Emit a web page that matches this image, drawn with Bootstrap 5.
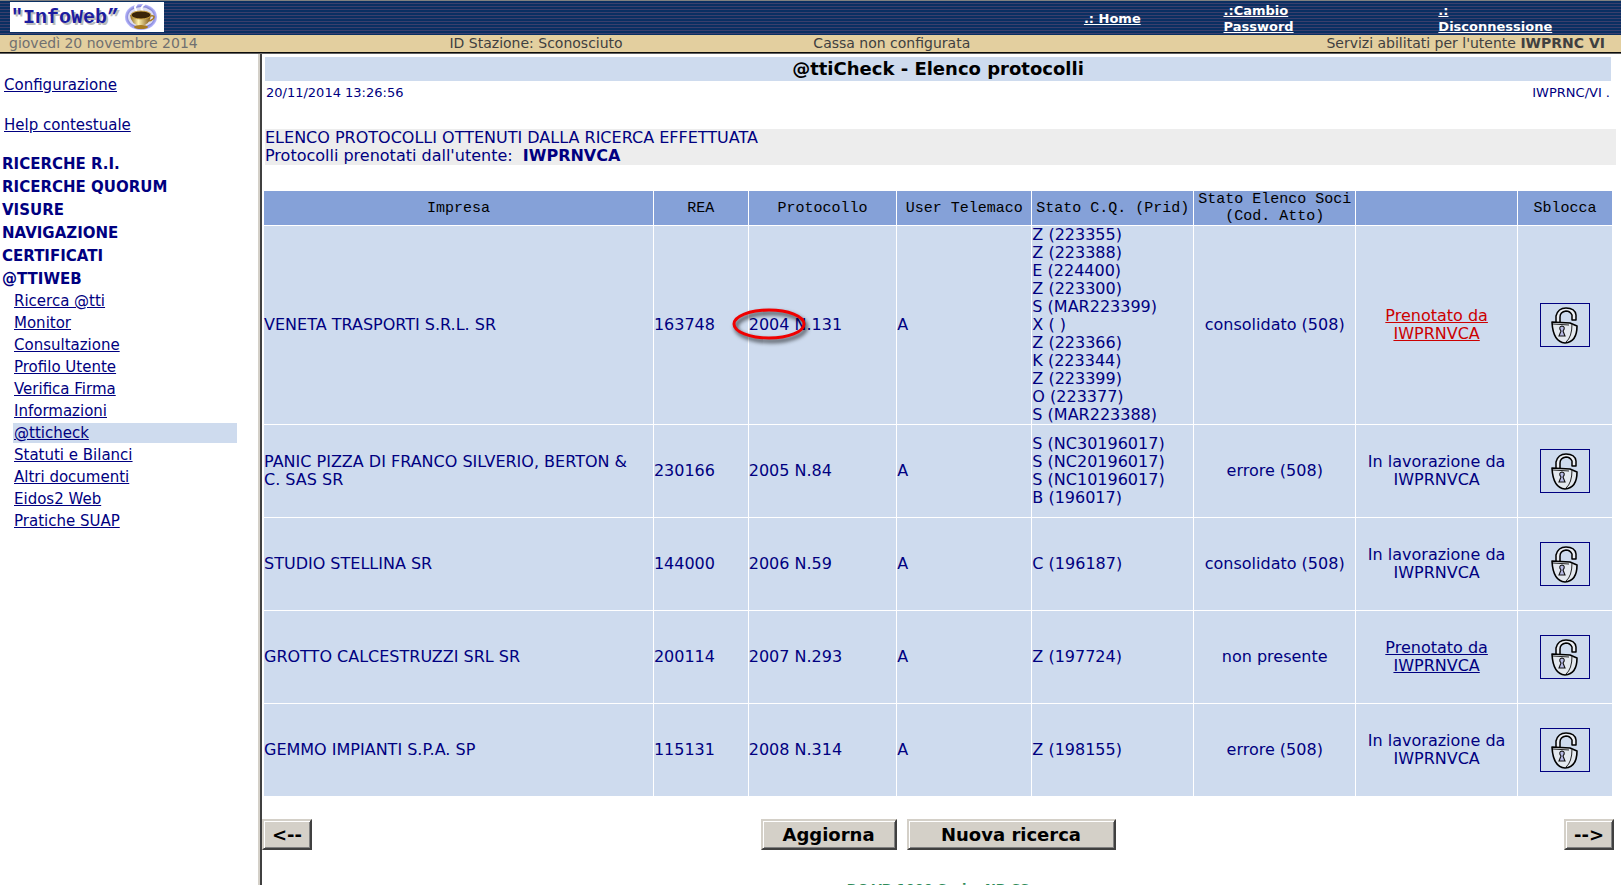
<!DOCTYPE html>
<html lang="it">
<head>
<meta charset="utf-8">
<meta name="viewport" content="width=device-width, initial-scale=1">
<title>InfoWeb - @ttiCheck</title>
<link href="https://cdn.jsdelivr.net/npm/bootstrap@5.3.0/dist/css/bootstrap.min.css" rel="stylesheet">
<style>
body{font-family:"DejaVu Sans",sans-serif;font-size:15px;line-height:18px;color:navy;background:#fff;height:100vh;overflow:hidden}
a{color:navy;text-decoration:underline}
.topband{height:35px;border-top:1px solid #808080;background:repeating-linear-gradient(#0a2f62 0 2px,#3a3f6c 2px 3px)}
.brandbox{background:#fff;width:154px;height:30px;margin:1px 0 0 10px}
.topnav{width:34%;padding:2px 0 0 14px;font-size:13px;line-height:16px;font-weight:700}
.topnav a{color:#fff}
.topnav .n1{width:26%}.topnav .n2{width:40%}
.statusbar{background:#e3cf9f;color:#404040;height:19px;line-height:17px;padding:0 16px 0 9px;border-bottom:2px groove #606060;font-size:14px}
.statusbar .c1{width:27.6%;color:#707070}.statusbar .c2{width:22.8%}
.sidepane{width:260px;padding-top:22px;border-right:2px solid #d4d0c8}
.sidepane h2{font-size:15px;line-height:23px;font-weight:700;margin:0;padding-left:2px}
.toplink{padding:0 0 22px 4px}
.toplink + h2{margin-top:-3px}
.sublist{margin:0 21px 0 13px}
.sublist li{line-height:20px;margin-bottom:2px;padding-left:1px}
.sublist .current{background:#cedbee}
.mainpane{border-left:2px solid #404040;padding:3px 7px 0 0}
.pagetitle{background:#cedbee;color:#000;font-size:18px;font-weight:700;line-height:24px;margin:0 3px}
.stamp{font-size:13px;margin:3px 4px 27px}
.resume{background:#ededed;font-size:16px;margin:0 -2px 25px 3px}
.tablebox{padding:0 1px}
.results{table-layout:fixed;border-collapse:separate;border-spacing:1px;font-size:16px;width:100%}
.results th{background:#85a1d8;color:#000;font:15px/17px "Liberation Mono",monospace;text-align:center;padding:0;height:34px}
.results td{background:#cedbee;height:92px;padding:0}
.locked{border:1px solid navy;background:none;width:50px;height:44px;padding:0}
.reserved{color:#c00}
.ring{left:-16px;top:-8px;width:80px;height:36px;pointer-events:none;overflow:visible}
.actions{margin-top:22px}
.actionpair{gap:10px}
.retro{background:#d4d0c8;border:2px solid;border-color:#d4d0c8 #404040 #404040 #d4d0c8;box-shadow:inset 1px 1px #fff,inset -1px -1px #808080;font-size:18px;font-weight:700;height:31px;padding:0;color:#000;width:50px}
.w-agg{width:136px}.w-new{width:209px}
.foot{color:#2e8b57;font-size:13px;font-weight:700;margin-top:30px}
</style>
<script src="https://cdn.jsdelivr.net/npm/bootstrap@5.3.0/dist/js/bootstrap.bundle.min.js"></script>
</head>
<body class="d-flex flex-column">
<svg width="0" height="0" class="position-absolute" aria-hidden="true">
<symbol id="lock" viewBox="0 0 28 38">
<path d="M5 16 L5 10 Q7 2 15 2 Q24 2 25 9 L25 14 L21 14 L21 9 Q19 5 15 5 Q9 6 9 11 L9 16" fill="#eceff4" stroke="#000" stroke-width="1.5" stroke-linejoin="round"/>
<path d="M1 16 L19 17 L26 20 Q26 36 14 37 Q2 36 1 16 Z" fill="#e4e9ef" stroke="#000" stroke-width="1.6" stroke-linejoin="round"/>
<path d="M21 18 Q21 31 15 36 M2 18 L18 19" fill="none" stroke="#222" stroke-width="1"/>
<path d="M8 30 L10 25 Q7 21 11 20 Q15 21 12 25 L14 30 Z" fill="#b9bce6" stroke="#111" stroke-width="1.1"/>
</symbol>
</svg>
<header>
<div class="topband d-flex justify-content-between">
<div class="brandbox flex-shrink-0">
<svg width="154" height="30" class="d-block" role="img" aria-label="InfoWeb">
<defs><radialGradient id="halo"><stop offset=".75" stop-color="#77c"/><stop offset="1" stop-color="#bbf"/></radialGradient><linearGradient id="gold"><stop stop-color="#8a6418"/><stop offset=".4" stop-color="#fff2b0"/><stop offset="1" stop-color="#7a5010"/></linearGradient></defs>
<g font-family="Liberation Mono, monospace" font-weight="700" font-size="20"><text x="3" y="23" fill="#bbb">"InfoWeb”</text><text x="1" y="21" fill="#1c1ca0">"InfoWeb”</text></g>
<ellipse cx="131" cy="15" rx="16" ry="13" fill="url(#halo)"/><ellipse cx="131" cy="15" rx="13" ry="10" fill="#dcdcf2"/>
<path d="M127 9 Q123 6 127 2 M133 9 Q129 6 135 2" stroke="#fff" stroke-width="2" fill="none"/>
<path d="M140 14 Q146 13 143 17 Q141 19 138 19" stroke="#a87a20" stroke-width="1.5" fill="none"/>
<path d="M120 13 Q121 23 131 24 Q140 23 141 13Z" fill="url(#gold)"/><ellipse cx="131" cy="13" rx="10" ry="4" fill="#3a2408" stroke="#c9a040"/><ellipse cx="131" cy="25" rx="7" ry="2" fill="#a87a20"/>
</svg>
</div>
<nav class="topnav d-flex align-items-center">
<div class="n1"><a href="#">.: Home</a></div>
<div class="n2"><a href="#">.:Cambio<br>Password</a></div>
<div><a href="#">.:<br>Disconnessione</a></div>
</nav>
</div>
<div class="statusbar d-flex">
<span class="c1">giovedì 20 novembre 2014</span><span class="c2">ID Stazione: Sconosciuto</span><span>Cassa non configurata</span><span class="ms-auto">Servizi abilitati per l'utente <b>IWPRNC VI</b></span>
</div>
</header>
<div class="d-flex flex-grow-1">
<aside class="sidepane flex-shrink-0">
<div class="toplink"><a href="#">Configurazione</a></div>
<div class="toplink"><a href="#">Help contestuale</a></div>
<h2>RICERCHE R.I.</h2><h2>RICERCHE QUORUM</h2><h2>VISURE</h2><h2>NAVIGAZIONE</h2><h2>CERTIFICATI</h2><h2>@TTIWEB</h2>
<ul class="sublist list-unstyled">
<li><a href="#">Ricerca @tti</a></li><li><a href="#">Monitor</a></li><li><a href="#">Consultazione</a></li><li><a href="#">Profilo Utente</a></li><li><a href="#">Verifica Firma</a></li><li><a href="#">Informazioni</a></li><li class="current"><a href="#">@tticheck</a></li><li><a href="#">Statuti e Bilanci</a></li><li><a href="#">Altri documenti</a></li><li><a href="#">Eidos2 Web</a></li><li><a href="#">Pratiche SUAP</a></li>
</ul>
</aside>
<main class="mainpane flex-grow-1">
<h1 class="pagetitle text-center">@ttiCheck - Elenco protocolli</h1>
<div class="stamp d-flex justify-content-between"><span>20/11/2014 13:26:56</span><span>IWPRNC/VI .</span></div>
<div class="resume">ELENCO PROTOCOLLI OTTENUTI DALLA RICERCA EFFETTUATA<br>Protocolli prenotati dall'utente:&nbsp; <b>IWPRNVCA</b></div>
<div class="tablebox">
<table class="results align-middle">
<colgroup><col style="width:29%"><col style="width:7%"><col style="width:11%"><col style="width:10%"><col style="width:12%"><col style="width:12%"><col style="width:12%"><col style="width:7%"></colgroup>
<thead><tr><th>Impresa</th><th>REA</th><th>Protocollo</th><th>User Telemaco</th><th>Stato C.Q. (Prid)</th><th>Stato Elenco Soci (Cod. Atto)</th><th></th><th>Sblocca</th></tr></thead>
<tbody>
<tr><td>VENETA TRASPORTI S.R.L. SR</td><td>163748</td><td><div class="position-relative">2004 N.131<svg class="ring position-absolute" viewBox="0 0 80 36" aria-hidden="true"><ellipse cx="36" cy="16" rx="35" ry="14" fill="none" stroke="#f00000" stroke-width="3" style="filter:drop-shadow(2px 3px 2px #000c)"/></svg></div></td><td>A</td><td>Z (223355)<br>Z (223388)<br>E (224400)<br>Z (223300)<br>S (MAR223399)<br>X ( )<br>Z (223366)<br>K (223344)<br>Z (223399)<br>O (223377)<br>S (MAR223388)</td><td class="text-center">consolidato (508)</td><td class="text-center"><a class="reserved" href="#">Prenotato da<br>IWPRNVCA</a></td><td class="text-center"><button class="locked" aria-label="Sblocca"><svg width="28" height="38"><use href="#lock"/></svg></button></td></tr>
<tr><td>PANIC PIZZA DI FRANCO SILVERIO, BERTON &amp;<br>C. SAS SR</td><td>230166</td><td>2005 N.84</td><td>A</td><td>S (NC30196017)<br>S (NC20196017)<br>S (NC10196017)<br>B (196017)</td><td class="text-center">errore (508)</td><td class="text-center">In lavorazione da<br>IWPRNVCA</td><td class="text-center"><button class="locked" aria-label="Sblocca"><svg width="28" height="38"><use href="#lock"/></svg></button></td></tr>
<tr><td>STUDIO STELLINA SR</td><td>144000</td><td>2006 N.59</td><td>A</td><td>C (196187)</td><td class="text-center">consolidato (508)</td><td class="text-center">In lavorazione da<br>IWPRNVCA</td><td class="text-center"><button class="locked" aria-label="Sblocca"><svg width="28" height="38"><use href="#lock"/></svg></button></td></tr>
<tr><td>GROTTO CALCESTRUZZI SRL SR</td><td>200114</td><td>2007 N.293</td><td>A</td><td>Z (197724)</td><td class="text-center">non presente</td><td class="text-center"><a href="#">Prenotato da<br>IWPRNVCA</a></td><td class="text-center"><button class="locked" aria-label="Sblocca"><svg width="28" height="38"><use href="#lock"/></svg></button></td></tr>
<tr><td>GEMMO IMPIANTI S.P.A. SP</td><td>115131</td><td>2008 N.314</td><td>A</td><td>Z (198155)</td><td class="text-center">errore (508)</td><td class="text-center">In lavorazione da<br>IWPRNVCA</td><td class="text-center"><button class="locked" aria-label="Sblocca"><svg width="28" height="38"><use href="#lock"/></svg></button></td></tr>
</tbody>
</table>
</div>
<div class="actions d-flex justify-content-between">
<button class="retro">&lt;--</button>
<div class="actionpair d-flex"><button class="retro w-agg">Aggiorna</button><button class="retro w-new">Nuova ricerca</button></div>
<button class="retro">--&gt;</button>
</div>
<div class="foot text-center">DC-VB.1000 Serie: NB-SS</div>
</main>
</div>
</body>
</html>
